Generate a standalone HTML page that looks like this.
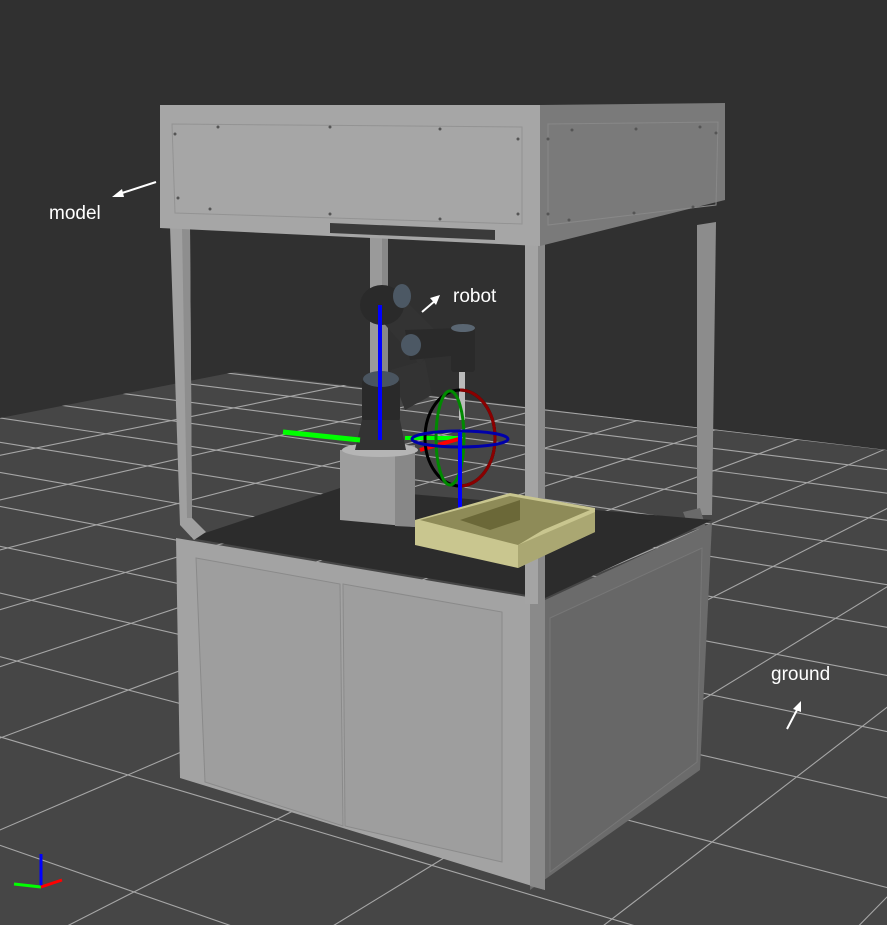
<!DOCTYPE html>
<html><head><meta charset="utf-8"><style>
html,body{margin:0;padding:0;background:#303030;width:887px;height:925px;overflow:hidden}
svg{display:block}
text{font-family:"Liberation Sans",sans-serif;fill:#fff;font-size:19px}
</style></head><body>
<svg width="887" height="925" viewBox="0 0 887 925" xmlns="http://www.w3.org/2000/svg" style="overflow:hidden">
<defs><clipPath id="g"><polygon points="0,418 235,372 887,450 887,925 0,925"/></clipPath></defs>
<rect width="887" height="925" fill="#303030"/>
<polygon points="0,418 235,372 887,450 887,925 0,925" fill="#464646"/>
<g stroke="#a6a6a6" stroke-width="1.1" fill="none" clip-path="url(#g)">
<line x1="-2150" y1="97" x2="1200" y2="486"/>
<line x1="-2150" y1="97" x2="1200" y2="508"/>
<line x1="-2150" y1="97" x2="1200" y2="534"/>
<line x1="-2150" y1="97" x2="1200" y2="564"/>
<line x1="-2150" y1="97" x2="1200" y2="597"/>
<line x1="-2150" y1="97" x2="1200" y2="635"/>
<line x1="-2150" y1="97" x2="1200" y2="682"/>
<line x1="-2150" y1="97" x2="1200" y2="735"/>
<line x1="-2150" y1="97" x2="1200" y2="797"/>
<line x1="-2150" y1="97" x2="1200" y2="870"/>
<line x1="-2150" y1="97" x2="1200" y2="969"/>
<line x1="-2150" y1="97" x2="1200" y2="1094"/>
<line x1="-2150" y1="97" x2="1200" y2="1263"/>
<line x1="-2150" y1="97" x2="1200" y2="1501"/>
<line x1="1650" y1="120" x2="-200" y2="496"/>
<line x1="1650" y1="120" x2="-200" y2="546"/>
<line x1="1650" y1="120" x2="-200" y2="602"/>
<line x1="1650" y1="120" x2="-200" y2="669"/>
<line x1="1650" y1="120" x2="-200" y2="733"/>
<line x1="1650" y1="120" x2="-200" y2="813"/>
<line x1="1650" y1="120" x2="-200" y2="916"/>
<line x1="1650" y1="120" x2="-200" y2="1062"/>
<line x1="1650" y1="120" x2="-200" y2="1252"/>
<line x1="1650" y1="120" x2="-200" y2="1544"/>
<line x1="1650" y1="120" x2="-200" y2="2004"/>
<line x1="1650" y1="120" x2="-200" y2="2788"/>
</g>
<rect x="370" y="236" width="18" height="145" fill="#9a9a9a"/>
<rect x="382" y="236" width="6" height="145" fill="#888"/>
<polygon points="697,225 716,222 712,515 697,515" fill="#8c8c8c"/>
<polygon points="683,512 700,508 706,528 690,530" fill="#6a6a6a"/>
<polygon points="190,538 340,488 712,520 545,598" fill="#2c2c2c"/>
<polygon points="176,538 545,600 545,890 180,778" fill="#a3a3a3"/>
<polygon points="196,558 340,584 343,826 205,782" fill="#9e9e9e" stroke="#8a8a8a"/>
<polygon points="343,584 502,612 502,862 345,826" fill="#9e9e9e" stroke="#8a8a8a"/>
<polygon points="545,600 712,523 700,770 530,890" fill="#6b6b6b"/>
<polygon points="550,618 702,548 697,762 550,872" fill="#676767" stroke="#777"/>
<polygon points="530,598 545,600 545,890 530,886" fill="#8a8a8a"/>
<polygon points="170,226 190,228 192,518 206,532 194,540 180,525" fill="#a0a0a0"/>
<polygon points="182,228 190,228 192,518 187,518" fill="#8e8e8e"/>
<rect x="525" y="244" width="20" height="360" fill="#a4a4a4"/>
<rect x="538" y="244" width="7" height="360" fill="#8a8a8a"/>
<polygon points="160,105 540,105 540,246 160,228" fill="#a6a6a6"/>
<polygon points="172,124 522,127 522,224 175,213" fill="none" stroke="#939393"/>
<polygon points="540,105 725,103 725,200 540,246" fill="#7a7a7a"/>
<polygon points="548,124 718,122 716,205 548,225" fill="none" stroke="#888"/>
<g fill="#555">
<circle cx="175" cy="134" r="1.5"/><circle cx="218" cy="127" r="1.5"/><circle cx="330" cy="127" r="1.5"/><circle cx="440" cy="129" r="1.5"/><circle cx="518" cy="139" r="1.5"/>
<circle cx="178" cy="198" r="1.5"/><circle cx="210" cy="209" r="1.5"/><circle cx="330" cy="214" r="1.5"/><circle cx="440" cy="219" r="1.5"/><circle cx="518" cy="214" r="1.5"/>
<circle cx="548" cy="139" r="1.5"/><circle cx="572" cy="130" r="1.5"/><circle cx="636" cy="129" r="1.5"/><circle cx="700" cy="127" r="1.5"/><circle cx="716" cy="133" r="1.5"/>
<circle cx="548" cy="214" r="1.5"/><circle cx="569" cy="220" r="1.5"/><circle cx="634" cy="213" r="1.5"/><circle cx="693" cy="207" r="1.5"/>
</g>
<polygon points="330,223 495,230 495,240 330,233" fill="#3a3a3a"/>
<polygon points="340,450 415,445 415,527 340,520" fill="#9e9e9e"/>
<polygon points="395,447 415,445 415,527 395,526" fill="#888"/>
<ellipse cx="380" cy="450" rx="38" ry="7" fill="#b5b5b5"/>
<g fill="#2a2a2a">
<polygon points="390,370 425,360 432,395 405,410" fill="#333"/>
<rect x="362" y="378" width="38" height="45" rx="5"/>
<polygon points="362,420 400,420 406,450 355,450" fill="#333"/>
<ellipse cx="381" cy="379" rx="18" ry="8" fill="#4a5560"/>
<polygon points="368,305 395,290 440,335 420,365" fill="#333"/>
<ellipse cx="382" cy="305" rx="22" ry="20"/>
<ellipse cx="402" cy="296" rx="9" ry="12" fill="#4c5864"/>
<polygon points="405,330 460,328 460,355 410,360"/>
<ellipse cx="411" cy="345" rx="10" ry="11" fill="#4c5864"/>
<rect x="451" y="326" width="24" height="46" rx="3"/>
<ellipse cx="463" cy="328" rx="12" ry="4" fill="#5a6672"/>
<rect x="459" y="372" width="6" height="48" fill="#bbb"/>
</g>
<line x1="380" y1="440" x2="380" y2="305" stroke="#0000ff" stroke-width="4"/>
<line x1="283" y1="432" x2="360" y2="440" stroke="#00ff00" stroke-width="5"/>
<line x1="405" y1="438" x2="460" y2="438" stroke="#00ff00" stroke-width="4"/>
<line x1="420" y1="450" x2="462" y2="438" stroke="#ff0000" stroke-width="4"/>
<ellipse cx="460" cy="438" rx="35" ry="48" fill="none" stroke="#000" stroke-width="3"/>
<path d="M460,390 A35,48 0 0 1 460,486" fill="none" stroke="#8a0000" stroke-width="3"/>
<ellipse cx="450" cy="438" rx="14" ry="47" fill="none" stroke="#008a00" stroke-width="3"/>
<ellipse cx="460" cy="439" rx="48" ry="8" fill="none" stroke="#0000aa" stroke-width="3"/>
<line x1="460" y1="432" x2="460" y2="510" stroke="#0000ff" stroke-width="4"/>
<polygon points="415,520 510,493 595,508 595,532 545,555 518,568 415,545" fill="#c9c68f"/>
<polygon points="420,520 510,496 590,510 543,530 518,545" fill="#8e8b58"/>
<polygon points="460,520 520,500 520,520 490,530" fill="#6b6838"/>
<polygon points="518,545 595,512 595,532 518,568" fill="#aaa772"/>
<text x="49" y="219">model</text>
<line x1="116" y1="195" x2="156" y2="182" stroke="#fff" stroke-width="2"/>
<polygon points="112,197 122,189 124,197" fill="#fff"/>
<text x="453" y="302">robot</text>
<line x1="422" y1="312" x2="436" y2="300" stroke="#fff" stroke-width="2"/>
<polygon points="440,295 430,298 436,305" fill="#fff"/>
<text x="771" y="680">ground</text>
<line x1="787" y1="729" x2="798" y2="708" stroke="#fff" stroke-width="2"/>
<polygon points="801,701 793,709 801,712" fill="#fff"/>
<line x1="41" y1="887" x2="41" y2="854" stroke="#0000ff" stroke-width="3"/>
<line x1="41" y1="887" x2="14" y2="884" stroke="#00ff00" stroke-width="3"/>
<line x1="41" y1="887" x2="62" y2="880" stroke="#ff0000" stroke-width="3"/>
</svg>
</body></html>
